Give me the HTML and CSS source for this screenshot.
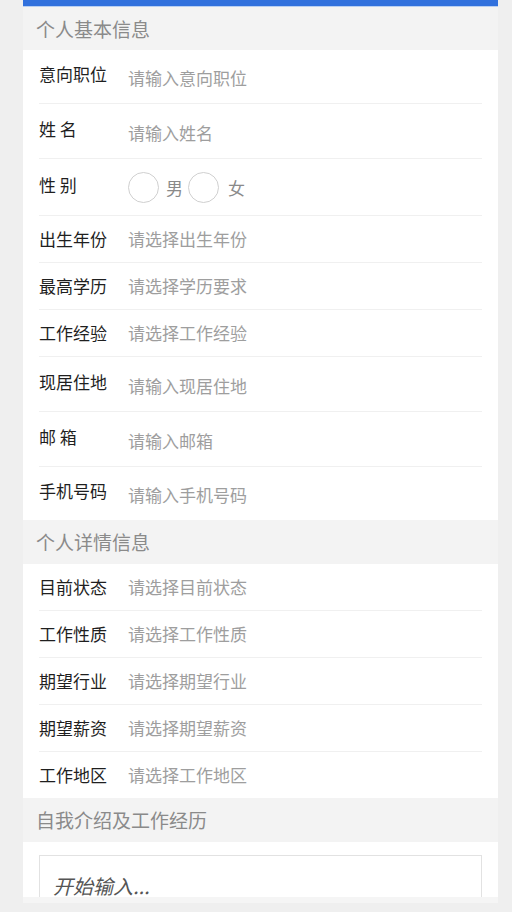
FILE: index.html
```html
<!DOCTYPE html>
<html lang="zh-CN">
<head>
    <meta charset="UTF-8">
    <meta name="viewport" content="width=device-width, initial-scale=1.0">
    <title>个人简历</title>
    <link rel="stylesheet" href="styles.css">
</head>
<body>
    <div class="page">
        <div class="scroll">
            <div class="topbar"></div>

            <div class="section-title">个人基本信息</div>
            <div class="group">
                <div class="row row-input first">
                    <label class="label">意向职位</label>
                    <input class="field" type="text" placeholder="请输入意向职位">
                </div>
                <div class="row row-input">
                    <label class="label">姓 名</label>
                    <input class="field" type="text" placeholder="请输入姓名">
                </div>
                <div class="row row-gender">
                    <label class="label">性 别</label>
                    <div class="radios">
                        <span class="radio"></span><span class="radio-text">男</span>
                        <span class="radio"></span><span class="radio-text">女</span>
                    </div>
                </div>
                <div class="row row-pick">
                    <span class="label">出生年份</span>
                    <span class="pick">请选择出生年份</span>
                </div>
                <div class="row row-pick">
                    <span class="label">最高学历</span>
                    <span class="pick">请选择学历要求</span>
                </div>
                <div class="row row-pick">
                    <span class="label">工作经验</span>
                    <span class="pick">请选择工作经验</span>
                </div>
                <div class="row row-input">
                    <label class="label">现居住地</label>
                    <input class="field" type="text" placeholder="请输入现居住地">
                </div>
                <div class="row row-input">
                    <label class="label">邮 箱</label>
                    <input class="field" type="text" placeholder="请输入邮箱">
                </div>
                <div class="row row-input last">
                    <label class="label">手机号码</label>
                    <input class="field" type="text" placeholder="请输入手机号码">
                </div>
            </div>

            <div class="section-title">个人详情信息</div>
            <div class="group">
                <div class="row row-pick">
                    <span class="label">目前状态</span>
                    <span class="pick">请选择目前状态</span>
                </div>
                <div class="row row-pick">
                    <span class="label">工作性质</span>
                    <span class="pick">请选择工作性质</span>
                </div>
                <div class="row row-pick">
                    <span class="label">期望行业</span>
                    <span class="pick">请选择期望行业</span>
                </div>
                <div class="row row-pick">
                    <span class="label">期望薪资</span>
                    <span class="pick">请选择期望薪资</span>
                </div>
                <div class="row row-pick last">
                    <span class="label">工作地区</span>
                    <span class="pick">请选择工作地区</span>
                </div>
            </div>

            <div class="section-title">自我介绍及工作经历</div>
            <div class="group intro">
                <textarea class="intro-box" placeholder="开始输入..."></textarea>
            </div>
        </div>
        <div class="bottom-strip"></div>
    </div>
</body>
</html>
```

FILE: styles.css
```css
body {
    margin: 0;
    background-color: #efefef;
    font-family: "Noto Sans CJK SC", "Noto Sans", sans-serif;
    color: #1f1f1f;
}

.page {
    width: 475px;
    margin-left: 23px;
}

.scroll {
    height: 897px;
    overflow: hidden;
    background-color: #ffffff;
}

.bottom-strip {
    height: 6px;
    background-color: #f5f5f5;
}

.topbar {
    height: 6px;
    background-color: #3171dd;
    border-bottom: 1px solid #b8cff2;
}

.section-title {
    height: 44px;
    line-height: 44px;
    padding-left: 13px;
    background-color: #f3f3f3;
    color: #8a8a8a;
    font-size: 19px;
}

.topbar + .section-title {
    height: 43px;
    line-height: 43px;
}

.group {
    background-color: #ffffff;
    padding: 0 16px;
}

.row {
    display: flex;
    align-items: center;
    border-bottom: 1px solid #f0f0f0;
    font-size: 17px;
}

.row.last {
    border-bottom: none;
}

.row-input {
    height: 54px;
}

.row-input.first {
    height: 53px;
}

.row-input.last {
    height: 53px;
}

.row-gender {
    height: 56px;
}

.row-pick {
    height: 46px;
}

.label {
    width: 89px;
    flex-shrink: 0;
    line-height: 22px;
    color: #1f1f1f;
}

.row-input .label,
.row-gender .label {
    padding-bottom: 5px;
}

.field {
    flex: 1;
    border: none;
    outline: none;
    padding: 3px 0 0;
    margin: 0;
    font-family: inherit;
    font-size: 17px;
    line-height: 22px;
    color: #333333;
    background: transparent;
}

.field::placeholder {
    color: #9e9e9e;
}

.pick {
    color: #9e9e9e;
    line-height: 22px;
}

.radios {
    display: flex;
    align-items: center;
}

.radio {
    width: 29px;
    height: 29px;
    border: 1px solid #d0d0d0;
    border-radius: 50%;
}

.radio-text {
    margin: 0 5px 0 7px;
    color: #8a8a8a;
}

.radio-text:last-child {
    margin-left: 9px;
}

.intro {
    padding-top: 13px;
}

.intro-box {
    display: block;
    box-sizing: border-box;
    width: 100%;
    height: 120px;
    margin: 0;
    padding: 16px 13px;
    border: 1px solid #e2e2e2;
    outline: none;
    resize: none;
    font-family: inherit;
    font-size: 20px;
    line-height: 28px;
    font-style: italic;
}

.intro-box::placeholder {
    color: #555555;
}
```
